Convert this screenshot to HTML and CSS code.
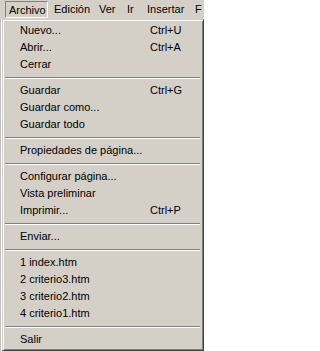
FILE: index.html
```
<!DOCTYPE html>
<html lang="es">
<head>
<meta charset="utf-8">
<title>Archivo</title>
<link rel="stylesheet" href="styles.css">
</head>
<body>
<div class="menubar">
  <div class="mb-item mb-archivo pressed">Archivo</div>
  <div class="mb-item mb-edicion">Edición</div>
  <div class="mb-item mb-ver">Ver</div>
  <div class="mb-item mb-ir">Ir</div>
  <div class="mb-item mb-insertar">Insertar</div>
  <div class="mb-item mb-f">F</div>
</div>
<div class="page"></div>
<div class="dropdown">
  <div class="item"><span>Nuevo...</span><span class="sc">Ctrl+U</span></div>
  <div class="item"><span>Abrir...</span><span class="sc">Ctrl+A</span></div>
  <div class="item"><span>Cerrar</span></div>
  <div class="sep"></div>
  <div class="item"><span>Guardar</span><span class="sc">Ctrl+G</span></div>
  <div class="item"><span>Guardar como...</span></div>
  <div class="item"><span>Guardar todo</span></div>
  <div class="sep"></div>
  <div class="item"><span>Propiedades de página...</span></div>
  <div class="sep"></div>
  <div class="item"><span>Configurar página...</span></div>
  <div class="item"><span>Vista preliminar</span></div>
  <div class="item"><span>Imprimir...</span><span class="sc">Ctrl+P</span></div>
  <div class="sep"></div>
  <div class="item"><span>Enviar...</span></div>
  <div class="sep"></div>
  <div class="item"><span>1 index.htm</span></div>
  <div class="item"><span>2 criterio3.htm</span></div>
  <div class="item"><span>3 criterio2.htm</span></div>
  <div class="item"><span>4 criterio1.htm</span></div>
  <div class="sep"></div>
  <div class="item"><span>Salir</span></div>
</div>
</body>
</html>
```
FILE: styles.css
```
html, body {
  margin: 0;
  padding: 0;
  width: 204px;
  height: 351px;
  overflow: hidden;
  background: #ffffff;
  font-family: "Liberation Sans", Arial, sans-serif;
  font-size: 11px;
  color: #000;
}

.menubar {
  display: flex;
  width: 204px;
  height: 19px;
  background: #d4d0c8;
  padding-left: 5px;
  box-sizing: border-box;
  white-space: nowrap;
  overflow: hidden;
}

.mb-item {
  flex: none;
  height: 17px;
  margin-top: 1px;
  line-height: 17px;
  padding-left: 6px;
  box-sizing: border-box;
}

.mb-archivo { width: 43px; padding-left: 3px; }
.mb-edicion { width: 45px; }
.mb-ver { width: 28px; }
.mb-ir { width: 20px; }
.mb-insertar { width: 48px; }
.mb-f { width: 15px; }

.pressed {
  border-top: 1px solid #808080;
  border-left: 1px solid #808080;
  border-right: 1px solid #ffffff;
  border-bottom: 1px solid #ffffff;
  line-height: 15px;
  padding-top: 1px;
}

.page {
  width: 204px;
  height: 332px;
  background: #ffffff;
  border-left: 1px solid #c0c0c0;
  box-sizing: border-box;
}

.dropdown {
  position: absolute;
  left: 2px;
  top: 19px;
  width: 202px;
  box-sizing: border-box;
  background: #d4d0c8;
  border: 1px solid;
  border-color: #d4d0c8 #404040 #404040 #d4d0c8;
  box-shadow: inset 1px 1px #ffffff, inset -1px -1px #808080;
  padding: 2px;
}

.item {
  display: grid;
  grid-template-columns: 130px auto;
  height: 17px;
  line-height: 17px;
  padding-left: 15px;
  white-space: nowrap;
}

.sep {
  height: 9px;
  margin: 0 1px 0 0;
  box-sizing: border-box;
  padding-top: 4px;
}

.sep::before {
  content: "";
  display: block;
  height: 1px;
  background: #808080;
  border-bottom: 1px solid #ffffff;
}
```
